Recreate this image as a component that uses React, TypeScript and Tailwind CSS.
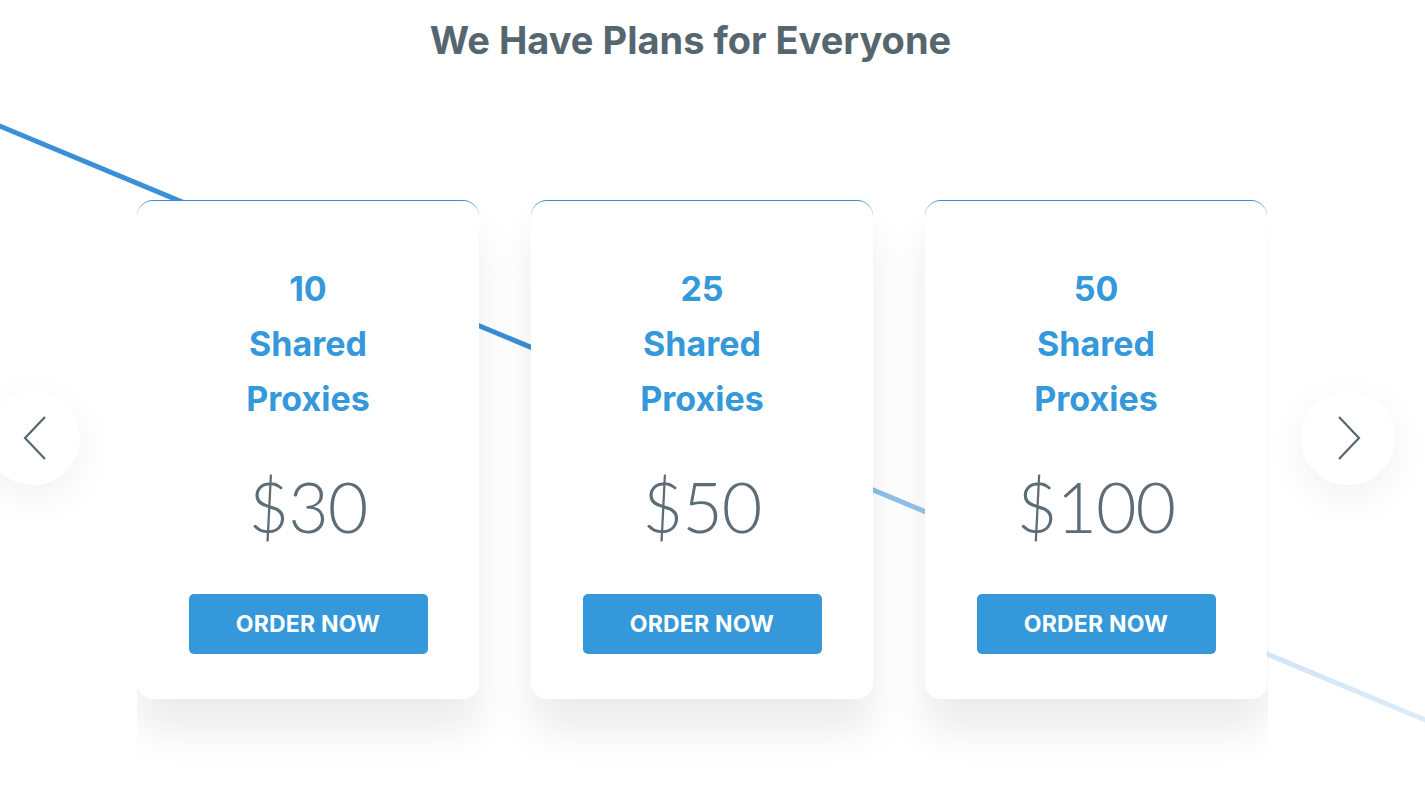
import { ReactNode } from "react";

const plans = [
  { count: "10", price: "$30" },
  { count: "25", price: "$50" },
  { count: "50", price: "$100" },
];

function ArrowButton({ side, children }: { side: "left" | "right"; children: ReactNode }) {
  return (
    <button
      className={`absolute top-[391px] z-20 flex h-[94px] w-[94px] items-center justify-center rounded-full bg-white shadow-[0_12px_40px_rgba(0,0,0,0.06)] ${
        side === "left" ? "left-[-14px]" : "left-[1301px]"
      }`}
    >
      {children}
    </button>
  );
}

export default function App() {
  return (
    <div className="relative h-[797px] w-full overflow-hidden bg-white" style={{ fontFamily: "Inter, 'Open Sans', sans-serif" }}>
      {/* background stroke */}
      <svg className="pointer-events-none absolute inset-0 z-0" width="1425" height="797" viewBox="0 0 1425 797">
        <defs>
          <linearGradient id="stroke" x1="0" y1="0" x2="1425" y2="0" gradientUnits="userSpaceOnUse">
            <stop offset="0" stopColor="#3a8fd6" />
            <stop offset="0.38" stopColor="#3a8fd6" />
            <stop offset="0.62" stopColor="#8cc0ea" />
            <stop offset="0.9" stopColor="#d3e6f6" />
            <stop offset="1" stopColor="#dcebf8" />
          </linearGradient>
        </defs>
        <line x1="-5" y1="124" x2="1430" y2="722" stroke="url(#stroke)" strokeWidth="5" />
      </svg>

      <h2 className="relative z-10 pt-[17px] pr-[44px] text-center text-[38px] font-bold leading-[46px] text-[#56666f]">
        We Have Plans for Everyone
      </h2>

      <div className="relative z-10 mt-[137px] ml-[137px] w-[1131px] overflow-hidden pb-[80px]">
        <div className="flex gap-[52px]">
          {plans.map((p) => (
            <div
              key={p.count}
              className="flex w-[342px] shrink-0 flex-col items-center rounded-2xl border-t border-[#3a8fd6] bg-white pt-[60px] pb-[45px] shadow-[0_32px_40px_rgba(0,0,0,0.08)]"
            >
              <div className="text-center text-[34px] font-bold leading-[55px] text-[#3498db]">
                {p.count}
                <br />
                Shared
                <br />
                Proxies
              </div>
              <div
                className="mt-[44px] text-[70px] font-light leading-[72px] tracking-[-1px] text-[#5d6d78]"
                style={{ fontFamily: "Lato, sans-serif" }}
              >
                {p.price}
              </div>
              <button className="mt-[52px] h-[60px] w-[239px] rounded-[5px] bg-[#3498db] text-[23px] font-bold tracking-[0.2px] text-white">
                ORDER NOW
              </button>
            </div>
          ))}
        </div>
      </div>

      <ArrowButton side="left">
        <svg width="30" height="46" viewBox="0 0 30 46" className="ml-[8px]">
          <polyline points="23,2 3,23 23,44" fill="none" stroke="#56666f" strokeWidth="2.2" />
        </svg>
      </ArrowButton>
      <ArrowButton side="right">
        <svg width="30" height="46" viewBox="0 0 30 46" className="ml-[2px]">
          <polyline points="5,2 25,23 5,44" fill="none" stroke="#56666f" strokeWidth="2.2" />
        </svg>
      </ArrowButton>
    </div>
  );
}
